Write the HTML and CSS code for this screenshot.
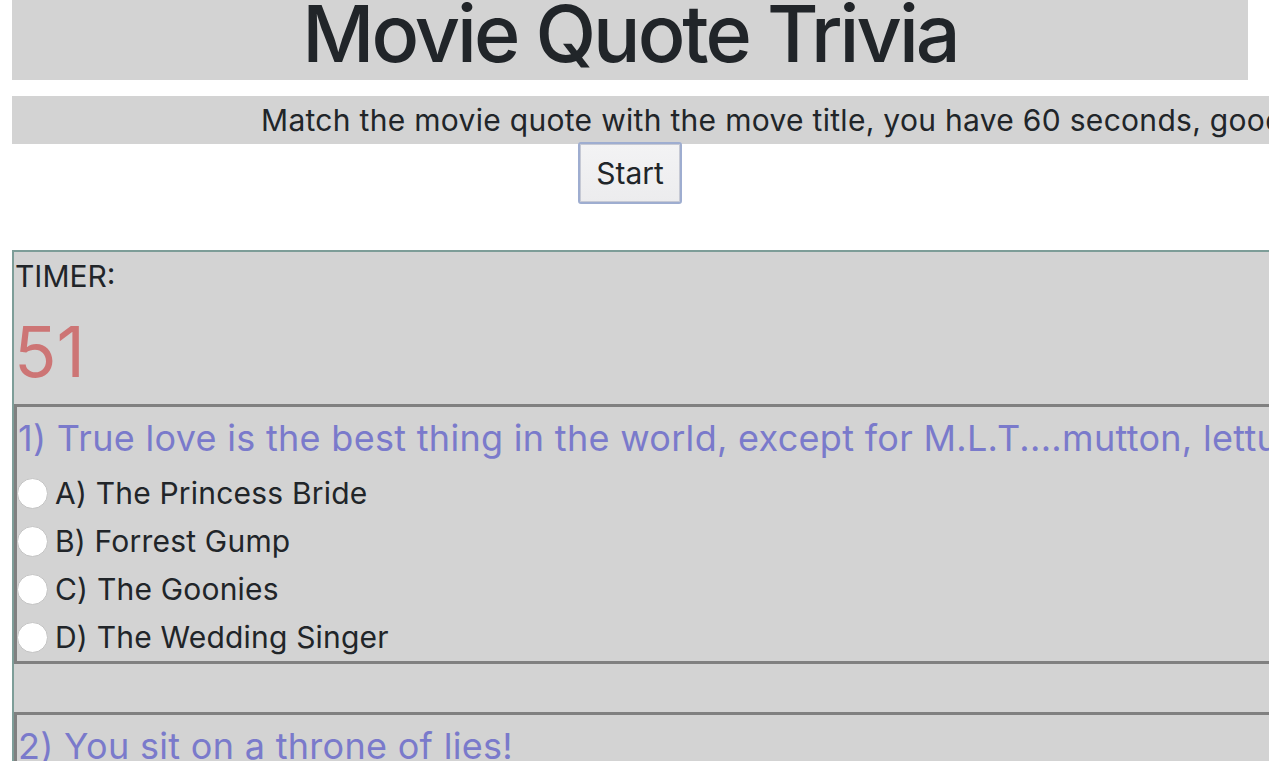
FILE: index.html
```html
<!DOCTYPE html>
<html lang="en">
<head>
<meta charset="utf-8">
<title>Movie Quote Trivia</title>
<link rel="stylesheet" href="styles.css">
</head>
<body>
<div class="page">
  <header class="title-bar">
    <h1 class="title">Movie Quote Trivia</h1>
  </header>
  <p class="intro">Match the movie quote with the move title, you have 60 seconds, good luck!</p>
  <div class="start-row">
    <button class="start-btn" type="button">Start</button>
  </div>
  <section class="game">
    <div class="timer-label">TIMER:</div>
    <div class="timer">51</div>
    <div class="question">
      <h2 class="question-text">1) True love is the best thing in the world, except for M.L.T....mutton, lettuce and tomato.</h2>
      <div class="options">
        <label class="option"><input type="radio" name="q1" class="radio"><span>A) The Princess Bride</span></label>
        <label class="option"><input type="radio" name="q1" class="radio"><span>B) Forrest Gump</span></label>
        <label class="option"><input type="radio" name="q1" class="radio"><span>C) The Goonies</span></label>
        <label class="option"><input type="radio" name="q1" class="radio"><span>D) The Wedding Singer</span></label>
      </div>
    </div>
    <div class="question">
      <h2 class="question-text">2) You sit on a throne of lies!</h2>
      <div class="options">
        <label class="option"><input type="radio" name="q2" class="radio"><span>A) Elf</span></label>
      </div>
    </div>
  </section>
</div>
</body>
</html>
```

FILE: styles.css
```css
html {
  overflow: hidden;
}
body {
  margin: 0;
  font-family: "Inter", "Liberation Sans", sans-serif;
  color: #212529;
  background: #ffffff;
}
.page {
  padding-left: 12px;
}
.title-bar {
  width: 1236px;
  height: 80px;
  background: #d3d3d3;
  text-align: center;
}
.title {
  margin: 0;
  font-size: 79px;
  font-weight: 500;
  line-height: 66px;
  letter-spacing: -3px;
}
.intro {
  margin: 16px 0 0;
  width: 1500px;
  height: 48px;
  background: #d3d3d3;
  font-size: 30px;
  line-height: 48px;
  letter-spacing: 0.3px;
  padding-left: 249px;
  box-sizing: border-box;
  white-space: nowrap;
}
.start-row {
  width: 1236px;
  display: flex;
  justify-content: center;
  margin-top: -2px;
}
.start-btn {
  width: 104px;
  height: 62px;
  font-family: inherit;
  font-size: 30px;
  color: #212529;
  background: linear-gradient(#f3f3f4, #ececee);
  border: 2px solid #9eadd0;
  border-radius: 3px;
  box-shadow: inset 0 0 0 1px #c6c9d4;
  padding: 0;
}
.game {
  margin-top: 46px;
  width: 1500px;
  background: #d3d3d3;
  border: 2px solid #7d9d98;
  border-right: none;
  border-bottom: none;
  padding-top: 2px;
  height: 600px;
}
.timer-label {
  font-size: 30px;
  line-height: 45px;
  padding-left: 1px;
}
.timer {
  font-size: 70px;
  line-height: 80px;
  color: #cd7575;
  margin-top: 13px;
}
.question {
  margin-top: 12px;
  border: 3px solid #808080;
  border-right: none;
  margin-bottom: 48px;
}
.question-text {
  margin: 0;
  font-size: 36px;
  font-weight: 400;
  line-height: 63px;
  letter-spacing: 0.3px;
  color: #7a7acb;
  white-space: nowrap;
  padding-left: 1px;
}
.options {
  margin-top: -1px;
  display: flex;
  flex-direction: column;
}
.option {
  display: flex;
  align-items: center;
  height: 48px;
  font-size: 30px;
  letter-spacing: 0.2px;
  gap: 7px;
}
.radio {
  appearance: none;
  -webkit-appearance: none;
  margin: 0;
  width: 31px;
  height: 31px;
  border-radius: 50%;
  background: #ffffff;
  border: 1px solid #c4c4c4;
  box-sizing: border-box;
}
```
